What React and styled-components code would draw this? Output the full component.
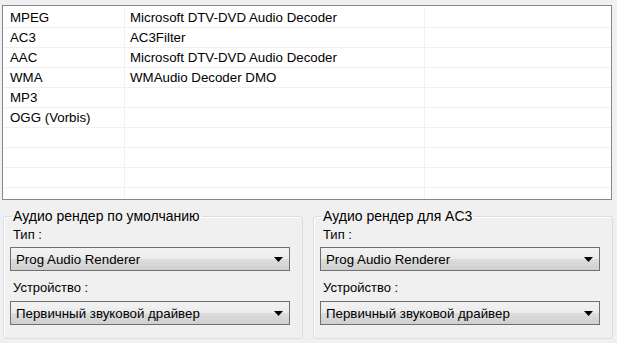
import React from 'react';
import styled, { createGlobalStyle } from 'styled-components';

const GlobalStyle = createGlobalStyle`
  html, body {
    margin: 0;
    padding: 0;
    background: #f0f0f0;
    font-family: "Liberation Sans", Arial, sans-serif;
  }
`;

const Page = styled.div`
  width: 617px;
  height: 343px;
  box-sizing: border-box;
  padding: 5px 0 0 2px;
  background: #f0f0f0;
  overflow: hidden;
`;

const ListBox = styled.div`
  width: 610px;
  height: 195px;
  box-sizing: border-box;
  border: 1px solid #828790;
  background: #fff;
  padding: 2px 0 0 1px;
  overflow: hidden;
`;

const Row = styled.div`
  display: grid;
  grid-template-columns: 121px 300px 186px;
  height: 20px;
  box-sizing: border-box;
  border-bottom: 1px solid #f0f0f0;
`;

const Cell = styled.div`
  font-size: 13.3px;
  line-height: 19px;
  color: #000;
  padding-left: ${p => (p.$first ? '6px' : '5px')};
  border-right: ${p => (p.$last ? 'none' : '1px solid #f0f0f0')};
  white-space: nowrap;
  overflow: hidden;
`;

const Groups = styled.div`
  display: flex;
  gap: 10px;
  padding-left: 1px;
  margin-top: 9px;
`;

const Group = styled.fieldset`
  width: 300px;
  height: 130px;
  box-sizing: border-box;
  margin: 0;
  padding: 0 0 0 6px;
  border: 1px solid #d5dfe5;
  border-radius: 3px;
  box-shadow: inset 1px 1px 0 #fff;
`;

const Legend = styled.legend`
  font-size: 14px;
  line-height: 15px;
  padding: 0 2px;
  margin-left: 1px;
  color: #000;
`;

const Label = styled.div`
  font-size: 13px;
  line-height: 15px;
  color: #000;
  margin: ${p => p.$top} 0 ${p => p.$bottom} 3px;
`;

const Select = styled.div`
  width: 280px;
  height: 24px;
  box-sizing: border-box;
  border: 1px solid #707070;
  background: linear-gradient(#f2f2f2 0%, #ebebeb 50%, #dddddd 51%, #cfcfcf 100%);
  display: flex;
  align-items: center;
  justify-content: space-between;
  padding: 0 5px;
  font-size: 13.3px;
  color: #000;
`;

const Arrow = styled.svg`
  width: 9px;
  height: 5px;
  margin-right: 1px;
`;

const rows = [
  ['MPEG', 'Microsoft DTV-DVD Audio Decoder'],
  ['AC3', 'AC3Filter'],
  ['AAC', 'Microsoft DTV-DVD Audio Decoder'],
  ['WMA', 'WMAudio Decoder DMO'],
  ['MP3', ''],
  ['OGG (Vorbis)', ''],
  ['', ''],
  ['', ''],
  ['', ''],
  ['', ''],
];

const Combo = ({ value }) => (
  <Select>
    <span>{value}</span>
    <Arrow viewBox="0 0 9 5">
      <path d="M0 0 H9 L4.5 5 Z" fill="#000" />
    </Arrow>
  </Select>
);

const RendererGroup = ({ title }) => (
  <Group>
    <Legend>{title}</Legend>
    <Label $top="3px" $bottom="5px">Тип :</Label>
    <Combo value="Prog Audio Renderer" />
    <Label $top="9px" $bottom="6px">Устройство :</Label>
    <Combo value="Первичный звуковой драйвер" />
  </Group>
);

const App = () => (
  <Page>
    <GlobalStyle />
    <ListBox>
      {rows.map((r, i) => (
        <Row key={i}>
          <Cell $first>{r[0]}</Cell>
          <Cell>{r[1]}</Cell>
          <Cell $last />
        </Row>
      ))}
    </ListBox>
    <Groups>
      <RendererGroup title="Аудио рендер по умолчанию" />
      <RendererGroup title="Аудио рендер для AC3" />
    </Groups>
  </Page>
);

export default App;
